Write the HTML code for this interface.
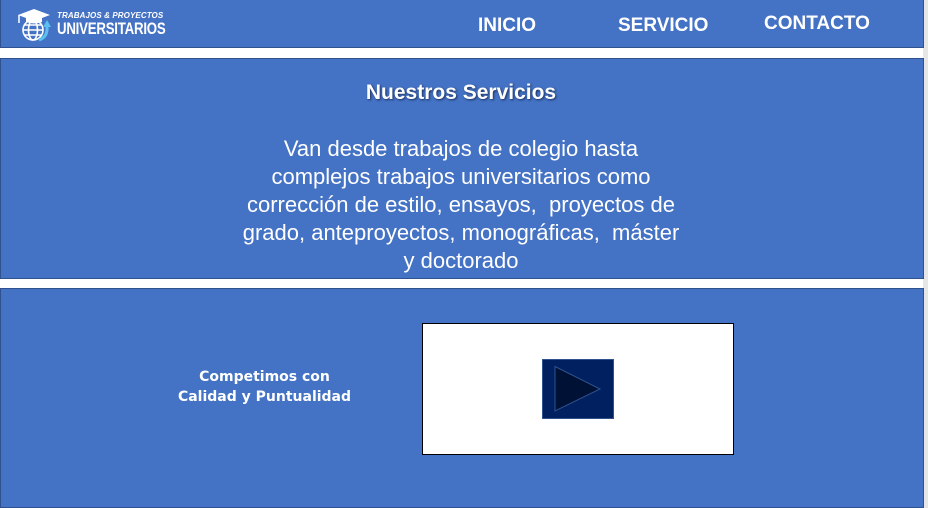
<!DOCTYPE html>
<html><head><meta charset="utf-8"><style>
html,body{margin:0;padding:0;width:928px;height:508px;overflow:hidden;background:#fff;font-family:"Liberation Sans",sans-serif;}
.sb{position:absolute;right:0;top:0;width:5px;height:508px;background:#e6e6e6;}
.blk{position:absolute;left:0;width:922px;background:#4472c4;border:1px solid #2f528f;box-sizing:content-box;}
.nav{position:absolute;top:14px;color:#fff;font-weight:bold;font-size:19px;}
.t{position:absolute;left:0;width:922px;text-align:center;color:#fff;}
</style></head><body>
<div class="sb"></div>
<div class="blk" style="top:0;height:47px;border-top:none;"></div>
<div class="blk" style="top:58px;height:219px;"></div>
<div class="blk" style="top:288px;height:218px;"></div>

<svg style="position:absolute;left:14px;top:6px" width="40" height="38" viewBox="0 0 40 38">
 <g fill="none" stroke="#fff" stroke-width="1.6">
  <circle cx="19" cy="24" r="10"/>
  <ellipse cx="19" cy="24" rx="4.5" ry="10"/>
  <line x1="9" y1="24" x2="29" y2="24"/>
  <path d="M10.5 19 H27.5 M10.5 29 H27.5"/>
 </g>
 <polygon points="4,9 20,3 36,9 20,15" fill="#fff"/>
 <path d="M12 11 v5 q8 3 16 0 v-5" fill="#fff"/>
 <line x1="5" y1="9" x2="5" y2="17" stroke="#fff" stroke-width="1.5"/>
 <path d="M25 34 q9 -3 8 -14" stroke="#5bc0f0" stroke-width="3" fill="none"/>
 <polygon points="29,21 33,14 37,21" fill="#5bc0f0"/>
</svg>
<div style="position:absolute;left:57px;top:11px;color:#fff;font-style:italic;font-weight:bold;font-size:8px;letter-spacing:0.1px">TRABAJOS &amp; PROYECTOS</div>
<div style="position:absolute;left:57px;top:19px;color:#fff;font-weight:bold;font-size:17px;transform:scaleX(0.78);transform-origin:left;letter-spacing:-0.3px">UNIVERSITARIOS</div>

<div class="nav" style="left:478px;top:15px">INICIO</div>
<div class="nav" style="left:618px;top:15px">SERVICIO</div>
<div class="nav" style="left:764px;top:13px">CONTACTO</div>

<div class="t" style="top:81px;font-size:21px;font-weight:bold;text-shadow:1px 1px 2px #1a2f5a;">Nuestros Servicios</div>
<div class="t" style="top:135px;font-size:22px;line-height:28px;">Van desde trabajos de colegio hasta<br>complejos trabajos universitarios como<br>corrección de estilo, ensayos,&nbsp; proyectos de<br>grado, anteproyectos, monográficas,&nbsp; máster<br>y doctorado</div>

<div style="position:absolute;left:132px;top:367px;width:265px;text-align:center;color:#fff;font-family:'DejaVu Sans',sans-serif;font-weight:bold;font-size:14px;line-height:20px;">Competimos con<br>Calidad y Puntualidad</div>

<div style="position:absolute;left:422px;top:323px;width:310px;height:130px;background:#fff;border:1px solid #000;"></div>
<svg style="position:absolute;left:542px;top:359px" width="72" height="60" viewBox="0 0 72 60">
 <rect x="0.5" y="0.5" width="71" height="59" fill="#002060" stroke="#2f528f"/>
 <polygon points="13,7.5 58,30 13,52" fill="#001136" stroke="#2f528f" stroke-width="1"/>
</svg>
</body></html>
